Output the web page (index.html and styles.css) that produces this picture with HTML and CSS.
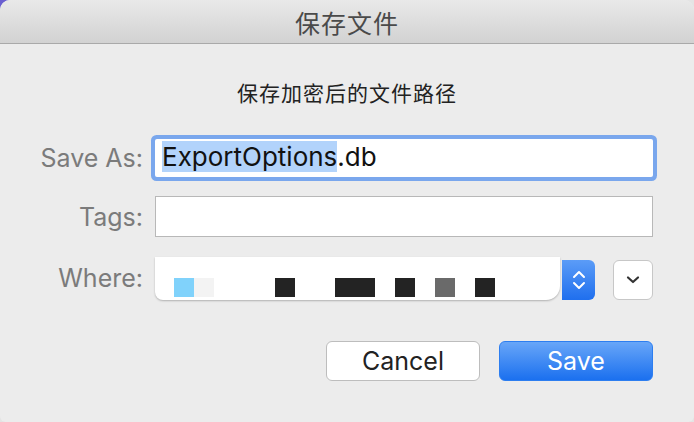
FILE: index.html
```html
<!DOCTYPE html>
<html lang="zh">

<head>
    <meta charset="utf-8">
    <title>保存文件</title>
    <link rel="stylesheet" href="styles.css">
</head>

<body>
    <div class="window">
        <header class="titlebar">保存文件</header>
        <main class="content">
            <p class="message">保存加密后的文件路径</p>

            <div class="form">
                <label class="label">Save As:</label>
                <div class="field focus">
                    <span class="sel">ExportOptions</span>.db
                </div>

                <label class="label">Tags:</label>
                <div class="field tags"></div>

                <label class="label">Where:</label>
                <div class="where">
                    <div class="popup">
                        <div class="path">
                            <span class="px lblue"></span>
                            <span class="px faint"></span>
                            <span class="px black" style="margin-left: 61px"></span>
                            <span class="px black wide" style="margin-left: 40px"></span>
                            <span class="px black" style="margin-left: 20px"></span>
                            <span class="px grey" style="margin-left: 20px"></span>
                            <span class="px black" style="margin-left: 20px"></span>
                        </div>
                        <div class="stepper">
                            <svg width="14" height="26" viewBox="0 0 14 26">
                                <path d="M2 10 L7 5 L12 10" fill="none" stroke="#fff" stroke-width="2" stroke-linecap="round" stroke-linejoin="round"/>
                                <path d="M2 16 L7 21 L12 16" fill="none" stroke="#fff" stroke-width="2" stroke-linecap="round" stroke-linejoin="round"/>
                            </svg>
                        </div>
                    </div>
                    <button class="expand">
                        <svg width="16" height="10" viewBox="0 0 16 10">
                            <path d="M3 2.5 L8 7 L13 2.5" fill="none" stroke="#333" stroke-width="2.2" stroke-linecap="round" stroke-linejoin="round"/>
                        </svg>
                    </button>
                </div>
            </div>

            <div class="buttons">
                <button class="btn cancel">Cancel</button>
                <button class="btn save">Save</button>
            </div>
        </main>
    </div>
</body>

</html>
```

FILE: styles.css
```css
body {
    margin: 0;
    background: radial-gradient(circle at 0 0, #6a5fd0 10px, #e4e4e4 10px);
    font-family: Inter, "Noto Sans CJK SC", sans-serif;
}

.window {
    width: 694px;
    height: 422px;
    background: #ececec;
    border-radius: 10px 10px 6px 6px;
    overflow: hidden;
    display: flex;
    flex-direction: column;
}

.titlebar {
    height: 43px;
    border-bottom: 1px solid #a9a9a9;
    background: linear-gradient(to bottom, #e9e9e9, #d2d2d2);
    color: #4a4a4a;
    font-family: "Noto Sans CJK SC", sans-serif;
    font-size: 25px;
    display: flex;
    align-items: center;
    justify-content: center;
    letter-spacing: 1px;
}

.content {
    flex: 1;
}

.message {
    margin: 35px 0 0;
    height: 26px;
    line-height: 26px;
    text-align: center;
    font-family: "Noto Sans CJK SC", sans-serif;
    font-size: 21px;
    letter-spacing: 1px;
    color: #222;
}

.form {
    display: grid;
    grid-template-columns: 143px 1fr;
    column-gap: 12px;
    row-gap: 19px;
    padding-right: 41px;
    margin-top: 34px;
}

.label {
    display: flex;
    align-items: center;
    justify-content: flex-end;
    font-size: 25px;
    color: #7b7b7b;
}

.field {
    background: #fff;
    box-sizing: border-box;
}

.focus {
    height: 38px;
    border-radius: 2px;
    box-shadow: 0 0 0 4px #7aa7ed;
    padding: 1px 0 0 7px;
    font-size: 26px;
    line-height: 34px;
    color: #111;
}

.sel {
    background: #b2d3fb;
}

.tags {
    height: 41px;
    border: 1px solid #b8b8b8;
}

.where {
    display: flex;
    align-items: center;
    gap: 18px;
}

.popup {
    display: flex;
    width: 440px;
    height: 43px;
}

.path {
    flex: 1;
    background: #fff;
    border-radius: 0 0 14px 8px;
    box-shadow: 0 1px 2px rgba(0, 0, 0, 0.25);
    display: flex;
    align-items: flex-end;
    padding: 0 0 3px 19px;
    box-sizing: border-box;
}

.px {
    width: 20px;
    height: 19px;
}

.px.wide {
    width: 40px;
}

.lblue {
    background: #80d2fb;
}

.faint {
    background: #f3f3f3;
}

.black {
    background: #232323;
}

.grey {
    background: #6a6a6a;
}

.stepper {
    width: 33px;
    height: 40px;
    margin: 3px 0 0 2px;
    border-radius: 0 6px 6px 0;
    background: linear-gradient(to bottom, #5b9cf7, #1f6fee);
    display: flex;
    align-items: center;
    justify-content: center;
}

.expand {
    width: 40px;
    height: 40px;
    margin-top: 4px;
    border: 1px solid #c7c7c7;
    border-radius: 6px;
    background: #fff;
    display: flex;
    align-items: center;
    justify-content: center;
    padding: 0;
}

.buttons {
    display: flex;
    justify-content: flex-end;
    gap: 19px;
    padding-right: 41px;
    margin-top: 41px;
}

.btn {
    width: 154px;
    height: 40px;
    border-radius: 6px;
    font-family: Inter, sans-serif;
    font-size: 25px;
    padding: 0;
}

.cancel {
    background: #fff;
    border: 1px solid #bdbdbd;
    color: #222;
}

.save {
    background: linear-gradient(to bottom, #68a6f8, #1b70ef);
    border: 1px solid #2d7ef0;
    color: #fff;
}
```
